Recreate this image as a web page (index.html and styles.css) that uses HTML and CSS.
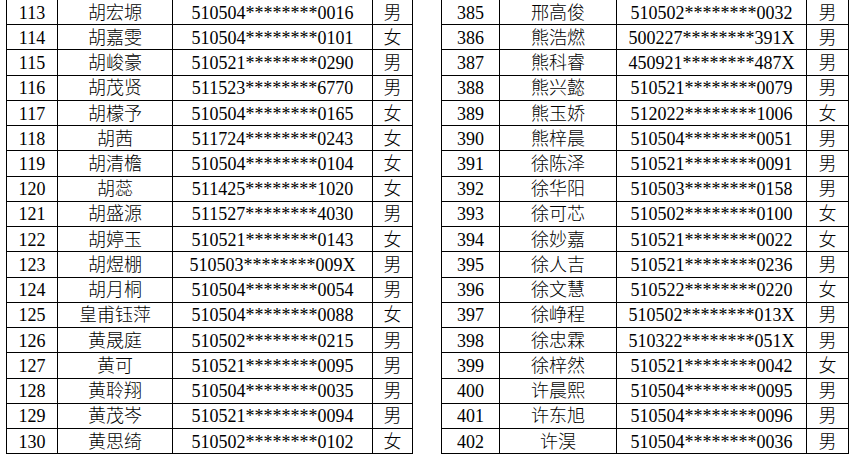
FILE: index.html
```html
<!DOCTYPE html>
<html lang="zh-CN">
<head>
<meta charset="utf-8">
<title>名单</title>
<link rel="stylesheet" href="styles.css">
</head>
<body>
<div class="sheet">
  <table class="roster roster-left">
    <colgroup><col class="c-no"><col class="c-name"><col class="c-id"><col class="c-sex"></colgroup>
    <tbody>
      <tr><td>113</td><td>胡宏塬</td><td>510504********0016</td><td>男</td></tr>
      <tr><td>114</td><td>胡嘉雯</td><td>510504********0101</td><td>女</td></tr>
      <tr><td>115</td><td>胡峻豪</td><td>510521********0290</td><td>男</td></tr>
      <tr><td>116</td><td>胡茂贤</td><td>511523********6770</td><td>男</td></tr>
      <tr><td>117</td><td>胡檬予</td><td>510504********0165</td><td>女</td></tr>
      <tr><td>118</td><td>胡茜</td><td>511724********0243</td><td>女</td></tr>
      <tr><td>119</td><td>胡清檐</td><td>510504********0104</td><td>女</td></tr>
      <tr><td>120</td><td>胡蕊</td><td>511425********1020</td><td>女</td></tr>
      <tr><td>121</td><td>胡盛源</td><td>511527********4030</td><td>男</td></tr>
      <tr><td>122</td><td>胡婷玉</td><td>510521********0143</td><td>女</td></tr>
      <tr><td>123</td><td>胡煜棚</td><td>510503********009X</td><td>男</td></tr>
      <tr><td>124</td><td>胡月桐</td><td>510504********0054</td><td>男</td></tr>
      <tr><td>125</td><td>皇甫钰萍</td><td>510504********0088</td><td>女</td></tr>
      <tr><td>126</td><td>黄晟庭</td><td>510502********0215</td><td>男</td></tr>
      <tr><td>127</td><td>黄可</td><td>510521********0095</td><td>男</td></tr>
      <tr><td>128</td><td>黄聆翔</td><td>510504********0035</td><td>男</td></tr>
      <tr><td>129</td><td>黄茂岑</td><td>510521********0094</td><td>男</td></tr>
      <tr><td>130</td><td>黄思绮</td><td>510502********0102</td><td>女</td></tr>
    </tbody>
  </table>
  <table class="roster roster-right">
    <colgroup><col class="c-no"><col class="c-name"><col class="c-id"><col class="c-sex"></colgroup>
    <tbody>
      <tr><td>385</td><td>邢高俊</td><td>510502********0032</td><td>男</td></tr>
      <tr><td>386</td><td>熊浩燃</td><td>500227********391X</td><td>男</td></tr>
      <tr><td>387</td><td>熊科睿</td><td>450921********487X</td><td>男</td></tr>
      <tr><td>388</td><td>熊兴懿</td><td>510521********0079</td><td>男</td></tr>
      <tr><td>389</td><td>熊玉娇</td><td>512022********1006</td><td>女</td></tr>
      <tr><td>390</td><td>熊梓晨</td><td>510504********0051</td><td>男</td></tr>
      <tr><td>391</td><td>徐陈泽</td><td>510521********0091</td><td>男</td></tr>
      <tr><td>392</td><td>徐华阳</td><td>510503********0158</td><td>男</td></tr>
      <tr><td>393</td><td>徐可芯</td><td>510502********0100</td><td>女</td></tr>
      <tr><td>394</td><td>徐妙嘉</td><td>510521********0022</td><td>女</td></tr>
      <tr><td>395</td><td>徐人吉</td><td>510521********0236</td><td>男</td></tr>
      <tr><td>396</td><td>徐文慧</td><td>510522********0220</td><td>女</td></tr>
      <tr><td>397</td><td>徐峥程</td><td>510502********013X</td><td>男</td></tr>
      <tr><td>398</td><td>徐忠霖</td><td>510322********051X</td><td>男</td></tr>
      <tr><td>399</td><td>徐梓然</td><td>510521********0042</td><td>女</td></tr>
      <tr><td>400</td><td>许晨熙</td><td>510504********0095</td><td>男</td></tr>
      <tr><td>401</td><td>许东旭</td><td>510504********0096</td><td>男</td></tr>
      <tr><td>402</td><td>许淏</td><td>510504********0036</td><td>男</td></tr>
    </tbody>
  </table>
</div>
</body>
</html>
```

FILE: styles.css
```css
html, body {
  margin: 0;
  padding: 0;
  background: #ffffff;
}

.sheet {
  display: flex;
  align-items: flex-start;
  gap: 28px;
  padding-left: 6px;
  margin-top: -1px;
}

.roster {
  border-collapse: separate;
  border-spacing: 0;
  table-layout: fixed;
  border-top: 1px solid #000;
  border-left: 1px solid #000;
  font-family: "Liberation Serif", "Noto Sans CJK SC", serif;
  font-size: 18px;
  font-weight: 300;
  color: #000;
}

.roster td {
  box-sizing: border-box;
  height: 25.235px;
  padding: 1px 0 0 0;
  border-right: 1px solid #000;
  border-bottom: 1px solid #000;
  text-align: center;
  vertical-align: middle;
  line-height: 22px;
  white-space: nowrap;
  overflow: hidden;
}

.roster-left { width: 407px; }
.roster-left .c-no { width: 51px; }
.roster-left .c-name { width: 115px; }
.roster-left .c-id { width: 200px; }
.roster-left .c-sex { width: 40px; }

.roster-right { width: 408px; }
.roster-right .c-no { width: 58px; }
.roster-right .c-name { width: 117px; }
.roster-right .c-id { width: 190px; }
.roster-right .c-sex { width: 42px; }
```
